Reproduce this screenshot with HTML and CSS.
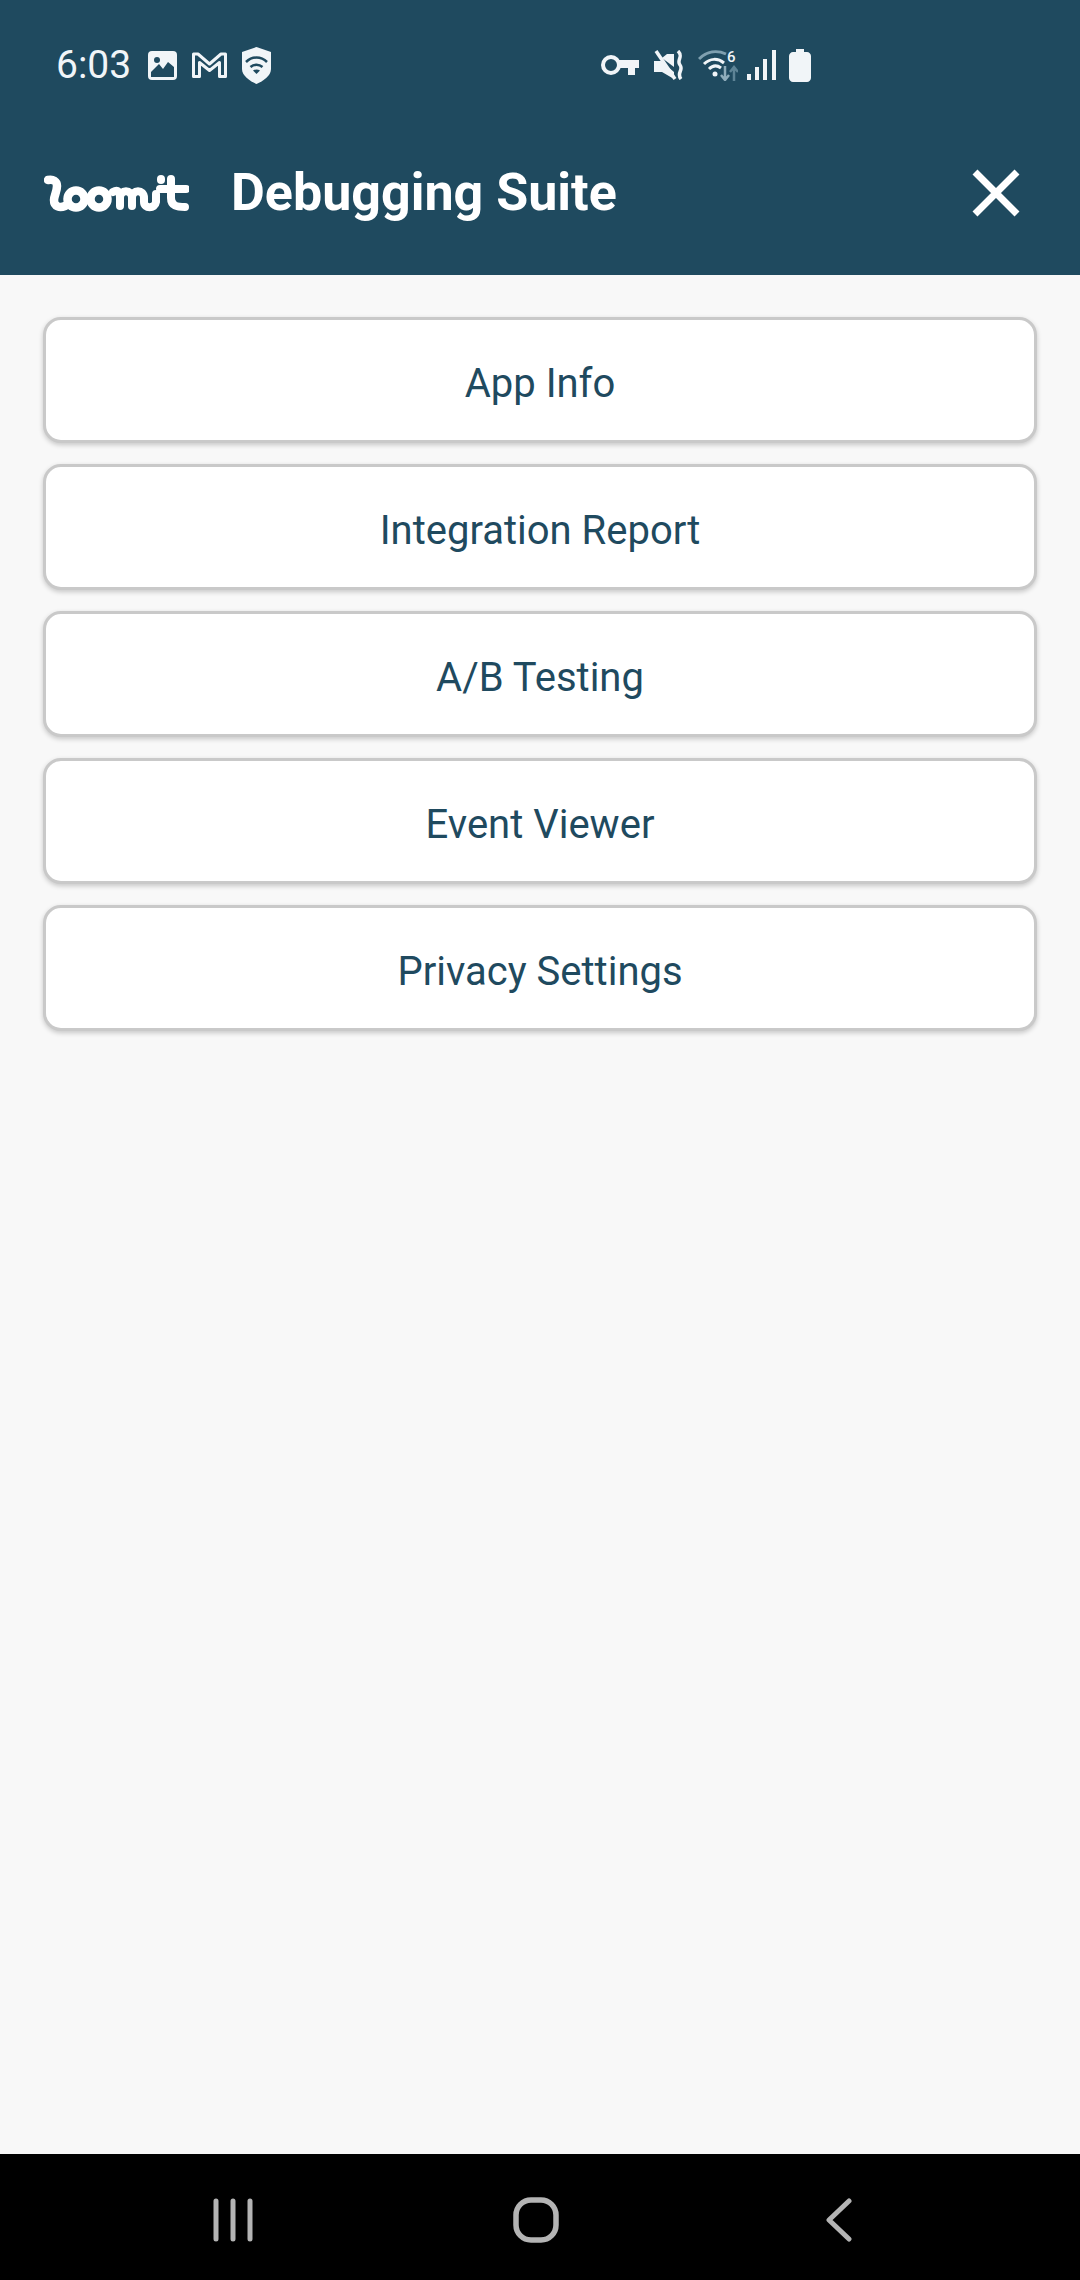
FILE: index.html
```html
<!DOCTYPE html>
<html lang="en">
<head>
    <meta charset="UTF-8">
    <meta name="viewport" content="width=device-width, initial-scale=1.0">
    <title>Debugging Suite</title>
    <link rel="stylesheet" href="styles.css">
</head>
<body>
    <div class="screen">
        <div class="top">
            <div class="status">
                <span class="time">6:03</span>
                <svg class="ic-image" viewBox="0 0 29 29"><rect width="29" height="29" rx="4" fill="#f1f5f8"/><circle cx="9" cy="9" r="3" fill="#1f4a5f"/><path d="M3 26V21L11 13L15 18L20 11L26 16V26Z" fill="#1f4a5f"/></svg>
                <svg class="ic-gmail" viewBox="0 0 35 26"><path d="M1.500 24.500V2H6L17.500 12L29 2H33.500V24.500H27.500V10.500L17.500 18.500L7.500 10.500V24.500Z" fill="none" stroke="#f1f5f8" stroke-width="3" stroke-linejoin="round"/></svg>
                <svg class="ic-shield" viewBox="0 0 29 37"><path d="M14.500 0L29 5V22C29 29 21 34 14.500 37C8 34 0 29 0 22V5Z" fill="#f1f5f8"/><path d="M4 15C10 9 19 9 25 15M8.500 20C12 17 17 17 20.500 20" fill="none" stroke="#1f4a5f" stroke-width="2.500"/><path d="M11 23.500C13 22 16 22 18 23.500L14.500 27Z" fill="#1f4a5f"/></svg>
                <div class="status-right">
                    <svg class="ic-key" viewBox="0 0 38 20"><circle cx="10" cy="10" r="8" fill="none" stroke="#f1f5f8" stroke-width="4"/><path d="M17 5H38V13H34V20H27V13H17Z" fill="#f1f5f8"/></svg>
                    <svg class="ic-mute" viewBox="0 0 30 30"><path d="M0 11H7L20 22V29L8 22H0Z" fill="#f1f5f8"/><path d="M8 8L13 4H20V17Z" fill="#f1f5f8"/><path d="M2 1L21 29" stroke="#f1f5f8" stroke-width="3.500"/><path d="M24 1C30 7 22 10 26 15C30 20 22 23 27 29" fill="none" stroke="#f1f5f8" stroke-width="3.500"/></svg>
                    <svg class="ic-wifi" viewBox="0 0 40 32"><path d="M1 10C9 2 19 1 28 5" fill="none" stroke="#7fa0b0" stroke-width="3"/><path d="M6 15C12 9 20 9 26 14M11 20C15 16 19 16 23 19" fill="none" stroke="#f1f5f8" stroke-width="3"/><circle cx="17" cy="25" r="2.500" fill="#f1f5f8"/><path d="M27 17V30M23 26L27 31L31 26" fill="none" stroke="#8fadbb" stroke-width="2.500"/><path d="M36 32V19M32 23L36 18L40 23" fill="none" stroke="#5e8496" stroke-width="2.500"/><text x="29" y="13" class="wifi-six">6</text></svg>
                    <svg class="ic-signal" viewBox="0 0 29 30"><rect x="0" y="24" width="4" height="6" fill="#f1f5f8"/><rect x="8" y="17" width="4" height="13" fill="#f1f5f8"/><rect x="16" y="9" width="4" height="21" fill="#f1f5f8"/><rect x="25" y="0" width="4" height="30" fill="#f1f5f8"/></svg>
                    <svg class="ic-battery" viewBox="0 0 22 33"><path d="M7 0H15V3H18C20 3 22 5 22 7V29C22 31 20 33 18 33H4C2 33 0 31 0 29V7C0 5 2 3 4 3H7Z" fill="#f1f5f8"/></svg>
                </div>
            </div>
            <div class="toolbar">
                <!-- logo -->
                <svg class="logo" viewBox="0 0 145 38"><path d="M4 6C9 5 13 7 13 12C13 18 10 22 10 26C10 33 16 34 21 32" fill="none" stroke="#fff" stroke-width="8.500" stroke-linecap="round"/><circle cx="32" cy="25" r="8.500" fill="none" stroke="#fff" stroke-width="8.500"/><circle cx="55" cy="25" r="8.500" fill="none" stroke="#fff" stroke-width="8.500"/><path d="M69 18C74 15 76 18 76 24V32M76 24C76 15 88 15 88 24V32M88 24C88 15 100 15 100 24V28C100 35 111 35 112 28V20" fill="none" stroke="#fff" stroke-width="8" stroke-linecap="round"/><path d="M117 5V6" stroke="#fff" stroke-width="8" stroke-linecap="round"/><path d="M127 5V24C127 32 133 33 141 33M116 15H142" fill="none" stroke="#fff" stroke-width="8" stroke-linecap="round"/></svg>
                <h1 class="title">Debugging Suite</h1>
                <svg class="close" viewBox="0 0 48 48"><path d="M3 3L45 45M45 3L3 45" stroke="#fff" stroke-width="7"/></svg>
            </div>
        </div>

        <div class="menu">
            <button class="menu-btn">App Info</button>
            <button class="menu-btn">Integration Report</button>
            <button class="menu-btn">A/B Testing</button>
            <button class="menu-btn">Event Viewer</button>
            <button class="menu-btn">Privacy Settings</button>
        </div>

        <div class="navbar">
            <svg class="nav-recent" viewBox="0 0 40 44"><path d="M3 3V41M20 3V41M37 3V41" stroke="#b4b4b4" stroke-width="5" stroke-linecap="round"/></svg>
            <svg class="nav-home" viewBox="0 0 46 46"><rect x="3" y="3" width="40" height="40" rx="15" fill="none" stroke="#b4b4b4" stroke-width="5.500"/></svg>
            <svg class="nav-back" viewBox="0 0 26 44"><path d="M23 3L3 22L23 41" fill="none" stroke="#b4b4b4" stroke-width="5" stroke-linecap="round" stroke-linejoin="round"/></svg>
        </div>
    </div>
</body>
</html>
```
FILE: styles.css
```css
* { box-sizing: border-box; }
body { margin: 0; font-family: Roboto, sans-serif; background: #f8f8f8; }

.screen {
    height: 2280px;
    display: flex;
    flex-direction: column;
}

.top { background: #1f4a5f; height: 275px; flex: none; }

.status {
    height: 130px;
    padding-left: 56px;
    display: flex;
    align-items: center;
}
.time { font-size: 39px; color: #f1f5f8; width: 92px; }
.status svg { display: block; flex: none; }
.ic-image { width: 29px; height: 29px; }
.ic-gmail { width: 35px; height: 26px; margin-left: 15px; }
.ic-shield { width: 29px; height: 37px; margin-left: 15px; }
.status-right {
    margin-left: 330px;
    display: flex;
    align-items: center;
}
.ic-key { width: 38px; height: 20px; }
.ic-mute { width: 30px; height: 30px; margin-left: 15px; }
.ic-wifi { width: 40px; height: 32px; margin-left: 14px; }
.ic-signal { width: 29px; height: 30px; margin-left: 9px; }
.ic-battery { width: 22px; height: 33px; margin-left: 13px; }
.wifi-six { font-family: Roboto, sans-serif; font-size: 15px; font-weight: 500; fill: #f1f5f8; }

.toolbar {
    height: 145px;
    padding: 0 60px 20px 44px;
    display: flex;
    align-items: center;
}
.logo { width: 145px; height: 38px; flex: none; }
.title {
    margin: 0 0 0 42px;
    font-size: 52px;
    font-weight: 700;
    color: #fff;
}
.close { width: 48px; height: 48px; margin-left: auto; flex: none; }

.menu {
    flex: 1;
    padding: 42px 43px 0;
    display: flex;
    flex-direction: column;
    gap: 21px;
}
.menu-btn {
    height: 126px;
    flex: none;
    padding: 6px 0 0;
    background: #fff;
    border: 3px solid #c9c9c9;
    border-radius: 18px;
    box-shadow: 0 2px 5px rgba(0, 0, 0, 0.2);
    font-family: Roboto, sans-serif;
    font-size: 40px;
    color: #1f4a5f;
}

.navbar {
    height: 126px;
    flex: none;
    background: #000;
    display: flex;
    align-items: center;
    padding: 6px 228px 0 213px;
    justify-content: space-between;
}
.nav-recent { width: 40px; height: 44px; }
.nav-home { width: 46px; height: 46px; margin-left: -7px; }
.nav-back { width: 26px; height: 44px; }
```
